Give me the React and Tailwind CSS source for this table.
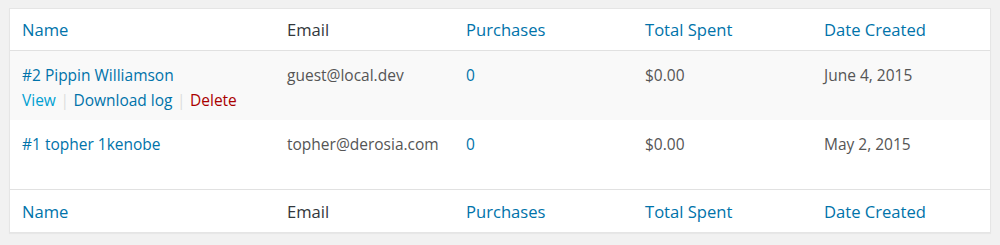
import React from "react";

const font = { fontFamily: '"Open Sans", "Noto Sans", sans-serif' };

function HeaderRow({ top }) {
  return (
    <div
      className={`flex items-center text-[16.6px] leading-[22px] ${
        top ? "h-[42px] border-b border-[#e1e1e1]" : "h-[43px] pt-[2px] border-t border-[#e1e1e1]"
      }`}
    >
      <div className="w-[265px] pl-[12px] text-[#0073aa]">Name</div>
      <div className="w-[179px] pl-[12px] text-[#32373c]">Email</div>
      <div className="w-[179px] pl-[12px] text-[#0073aa]">Purchases</div>
      <div className="w-[179px] pl-[12px] text-[#0073aa]">Total Spent</div>
      <div className="flex-1 pl-[12px] text-[#0073aa]">Date Created</div>
    </div>
  );
}

function Row({ name, email, date, alt, actions }) {
  return (
    <div
      className={`flex h-[69px] pt-[13px] text-[15.5px] leading-[22px] ${
        alt ? "bg-[#f9f9f9]" : "bg-white"
      }`}
    >
      <div className="w-[265px] pl-[12px]">
        <div className="text-[#0073aa]">{name}</div>
        {actions && (
          <div className="mt-[3px] flex items-center">
            <span className="text-[#00a0d2]">View</span>
            <span className="px-[4.5px] text-[#dddddd]">|</span>
            <span className="text-[#0073aa]">Download log</span>
            <span className="px-[4.5px] text-[#dddddd]">|</span>
            <span className="text-[#a00]">Delete</span>
          </div>
        )}
      </div>
      <div className="w-[179px] pl-[12px] text-[#555]">{email}</div>
      <div className="w-[179px] pl-[12px] text-[#0073aa]">0</div>
      <div className="w-[179px] pl-[12px] text-[#555]">$0.00</div>
      <div className="flex-1 pl-[12px] text-[#555]">{date}</div>
    </div>
  );
}

export default function App() {
  return (
    <div className="min-h-[245px] w-[1000px] bg-[#f1f1f1] pt-[8px] pl-[9px] pr-[9px]" style={font}>
      <div className="border border-[#e5e5e5] bg-white shadow-[0_1px_1px_rgba(0,0,0,0.04)]">
        <HeaderRow top />
        <Row name="#2 Pippin Williamson" email="guest@local.dev" date="June 4, 2015" alt actions />
        <Row name="#1 topher 1kenobe" email="topher@derosia.com" date="May 2, 2015" />
        <HeaderRow />
      </div>
    </div>
  );
}
